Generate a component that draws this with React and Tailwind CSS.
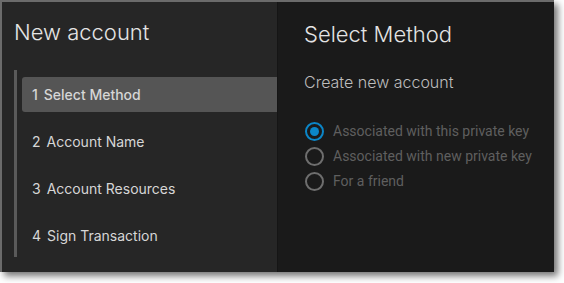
import React from "react";

const steps = ["Select Method", "Account Name", "Account Resources", "Sign Transaction"];

const options = [
  { label: "Associated with this private key", checked: true },
  { label: "Associated with new private key", checked: false },
  { label: "For a friend", checked: false },
];

function Radio({ checked }) {
  return (
    <span
      className={`flex h-[19px] w-[19px] shrink-0 items-center justify-center rounded-full border-2 ${
        checked ? "border-[#0b86c8]" : "border-[#6e6e6e]"
      }`}
    >
      {checked && <span className="h-[9px] w-[9px] rounded-full bg-[#0b86c8]" />}
    </span>
  );
}

export default function App() {
  return (
    <div className="min-h-screen bg-white font-['Inter',sans-serif]">
      <div className="flex h-[272px] w-[554px] border-l-2 border-t-2 border-[#6b6b6b] shadow-[4px_4px_7px_rgba(0,0,0,0.55)]">
        {/* Steps sidebar */}
        <div className="flex w-[275px] flex-col bg-[#262626] pt-[16px]">
          <h1 className="pl-3 text-[22px] font-light leading-[28px] text-[#e4e4e4]">New account</h1>
          <div className="ml-3 mt-[24px] flex flex-col gap-3 border-l-[3px] border-[#5a5a5a] pb-[4px] pl-[5px] pt-[7px]">
            {steps.map((s, i) => (
              <div
                key={s}
                className={`flex h-[35px] items-center gap-[6px] rounded-l-[3px] px-[10px] text-[14px] text-[#d6d6d6] ${
                  i === 0 ? "bg-[#555555] font-medium" : ""
                }`}
              >
                <span>{i + 1}</span>
                <span>{s}</span>
              </div>
            ))}
          </div>
        </div>

        {/* Content */}
        <div className="flex-1 border-l border-[#151515] bg-[#1a1a1a] pl-[26px] pt-[18px]">
          <h2 className="text-[22px] font-light leading-[28px] text-[#e4e4e4]">Select Method</h2>
          <p className="mt-[24px] text-[16px] font-light leading-[20px] text-[#bdbdbd]">Create new account</p>
          <div className="mt-[30px] flex flex-col gap-[6px] pl-[1px]">
            {options.map((o) => (
              <label key={o.label} className="flex h-[19px] items-center gap-[9px] font-['Roboto',sans-serif] text-[14px] text-[#5f5f5f]">
                <Radio checked={o.checked} />
                <span>{o.label}</span>
              </label>
            ))}
          </div>
        </div>
      </div>
    </div>
  );
}
